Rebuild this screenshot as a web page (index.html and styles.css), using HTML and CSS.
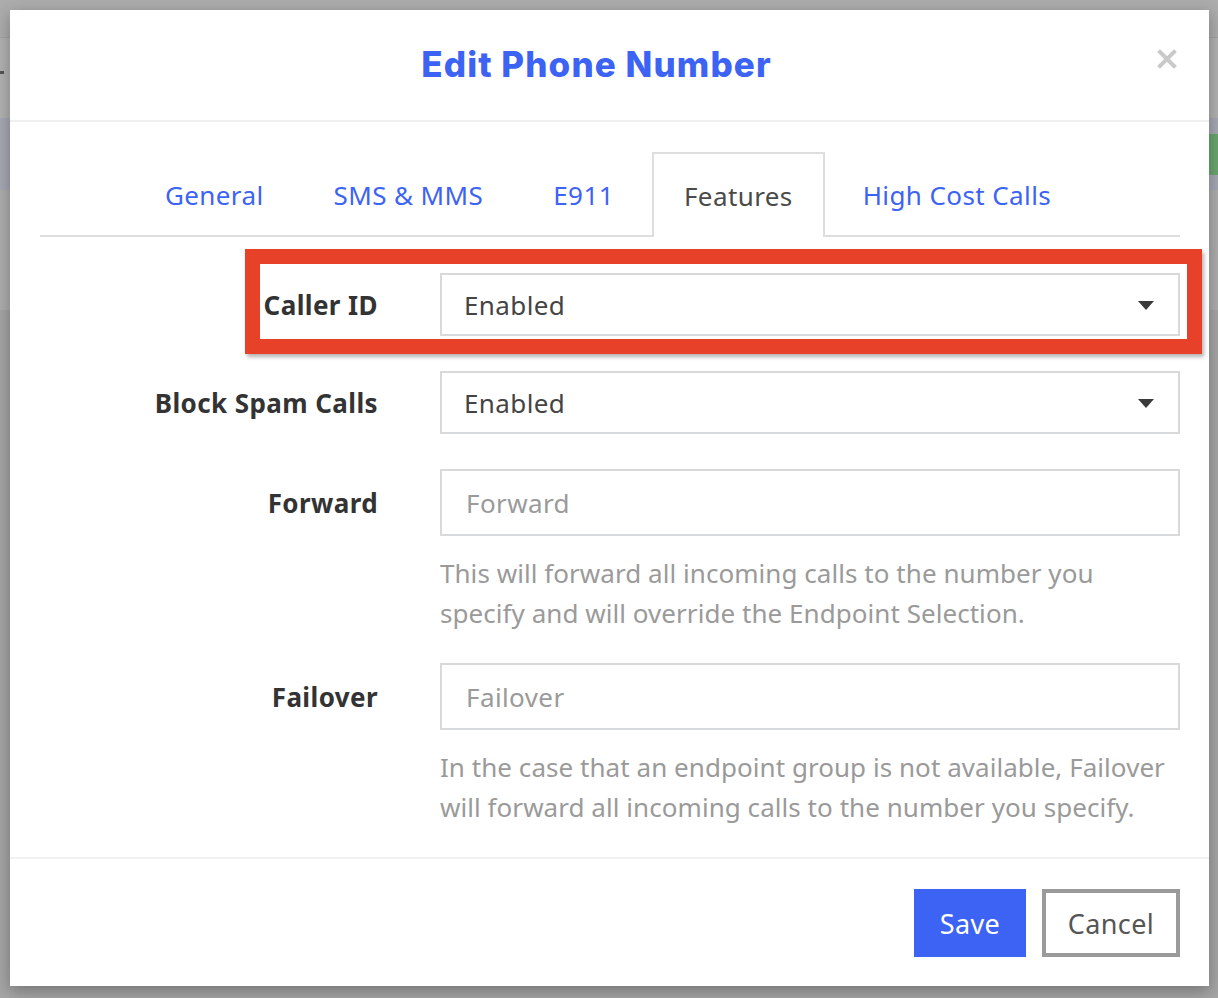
FILE: index.html
```html
<!DOCTYPE html>
<html lang="en">
<head>
  <meta charset="UTF-8">
  <meta name="viewport" content="width=device-width, initial-scale=1.0">
  <title>Edit Phone Number</title>
  <link rel="stylesheet" href="styles.css">
</head>
<body>

  <!-- page behind the dialog (dimmed) -->
  <div class="page">
    <div class="page-top"></div>
    <div class="page-nav"><span class="nav-mark"></span></div>
    <div class="page-band"><span class="band-btn"></span></div>
    <div class="page-row"></div>
    <div class="page-rest"></div>
  </div>

  <div class="modal">
    <div class="modal-header">
      <h2 class="modal-title">Edit Phone Number</h2>
      <button class="close" aria-label="Close">
        <svg width="20" height="20" viewBox="0 0 20 20">
          <path d="M3 3 L17 17 M17 3 L3 17" stroke="#c9c9c9" stroke-width="4" stroke-linecap="square"/>
        </svg>
      </button>
    </div>

    <div class="modal-body">
      <ul class="tabs">
        <li><a href="#">General</a></li>
        <li><a href="#">SMS &amp; MMS</a></li>
        <li><a href="#">E911</a></li>
        <li class="active"><a href="#">Features</a></li>
        <li><a href="#">High Cost Calls</a></li>
      </ul>

      <form class="features">
        <label class="label">Caller ID</label>
        <div class="select">
          <span>Enabled</span>
          <svg class="caret" width="16" height="9" viewBox="0 0 16 9"><path d="M0 0 H16 L8 9 Z" fill="#3a3a3a"/></svg>
        </div>

        <label class="label">Block Spam Calls</label>
        <div class="select">
          <span>Enabled</span>
          <svg class="caret" width="16" height="9" viewBox="0 0 16 9"><path d="M0 0 H16 L8 9 Z" fill="#3a3a3a"/></svg>
        </div>

        <label class="label label-input">Forward</label>
        <input class="input" type="text" placeholder="Forward">
        <p class="help">This will forward all incoming calls to the number you specify and will override the Endpoint Selection.</p>

        <label class="label label-input">Failover</label>
        <input class="input" type="text" placeholder="Failover">
        <p class="help">In the case that an endpoint group is not available, Failover will forward all incoming calls to the number you specify.</p>
      </form>
    </div>

    <div class="modal-footer">
      <button class="btn btn-save">Save</button>
      <button class="btn btn-cancel">Cancel</button>
    </div>

    <!-- annotation round the Caller ID row -->
    <div class="highlight"></div>
  </div>

</body>
</html>
```

FILE: styles.css
```css
* {
  box-sizing: border-box;
}

body {
  margin: 0;
  background-color: #a4a4a4;
  font-family: "Noto Sans", "Open Sans", sans-serif;
  overflow: hidden;
}

/* dimmed page behind */
.page-top {
  height: 38px;
  background-color: #acacac;
  border-bottom: 1px solid #a2a2a2;
}

.page-nav {
  height: 80px;
  background-color: #b1b1b1;
  position: relative;
}

.nav-mark {
  position: absolute;
  left: 0;
  top: 33px;
  width: 4px;
  height: 3px;
  background-color: #555;
}

.page-band {
  height: 72px;
  background-color: #a6a8b2;
  display: flex;
  justify-content: flex-end;
  align-items: center;
}

.band-btn {
  width: 12px;
  height: 41px;
  background-color: #6aa56e;
}

.page-row {
  height: 120px;
  background-color: #adadad;
}

.page-rest {
  height: 688px;
  background-color: #a5a5a5;
}

/* dialog */
.modal {
  position: absolute;
  left: 10px;
  top: 10px;
  width: 1199px;
  height: 976px;
  background-color: #fff;
  box-shadow: 0 5px 15px rgba(0, 0, 0, 0.3);
  display: flex;
  flex-direction: column;
}

.modal-header {
  position: relative;
  flex-shrink: 0;
  height: 112px;
  border-bottom: 2px solid #efefef;
  display: flex;
  justify-content: center;
  align-items: center;
  padding-right: 26px;
}

.modal-title {
  margin: 0 0 2px 0;
  font-family: "Inter", sans-serif;
  font-weight: 800;
  font-size: 35px;
  letter-spacing: 1.1px;
  color: #3d63f5;
}

.close {
  position: absolute;
  right: 32px;
  top: 39px;
  background: none;
  border: none;
  padding: 0;
  cursor: pointer;
}

.modal-body {
  flex: 1;
  padding: 30px 29px 0 30px;
}

.tabs {
  list-style: none;
  margin: 0;
  padding: 0 4px 0 0;
  display: flex;
  justify-content: center;
  gap: 6px;
  border-bottom: 2px solid #dedede;
}

.tabs li {
  height: 83px;
  margin-bottom: -2px;
  border: 2px solid transparent;
  border-bottom: none;
  display: flex;
  align-items: center;
}

.tabs a {
  display: block;
  padding: 0 30px;
  font-size: 26px;
  letter-spacing: 0.4px;
  color: #3d63f5;
  text-decoration: none;
}

.tabs li.active {
  border-color: #dedede;
  background-color: #fff;
  height: 85px;
}

.tabs li.active a {
  color: #4a4a4a;
}

.features {
  display: grid;
  grid-template-columns: 338px 1fr;
  column-gap: 62px;
  align-items: center;
  padding-top: 36px;
}

.label {
  text-align: right;
  font-weight: 700;
  font-size: 26px;
  letter-spacing: 0.4px;
  color: #333;
  margin-bottom: 35px;
}

.label-input {
  margin-bottom: 17px;
}

.select,
.input {
  height: 63px;
  border: 2px solid #d7d9dd;
  background-color: #fff;
  margin-bottom: 35px;
  font-family: inherit;
  font-size: 26px;
  letter-spacing: 0.4px;
  color: #444;
}

.select {
  display: flex;
  align-items: center;
  justify-content: space-between;
  padding: 0 24px 0 22px;
}

.caret {
  margin-top: 1px;
}

.input {
  width: 100%;
  padding: 0 24px;
  margin-bottom: 17px;
  height: 67px;
}

.input::placeholder {
  color: #9a9a9a;
}

.help {
  grid-column: 2;
  margin: 0 0 30px 0;
  font-size: 26px;
  letter-spacing: 0.05px;
  line-height: 40px;
  color: #9a9a9a;
}

.modal-footer {
  flex-shrink: 0;
  height: 129px;
  border-top: 2px solid #f1f1f1;
  display: flex;
  justify-content: flex-end;
  align-items: flex-start;
  gap: 16px;
  padding: 30px 29px 0 0;
}

.btn {
  height: 68px;
  font-family: inherit;
  font-size: 27px;
  letter-spacing: 0.4px;
  cursor: pointer;
}

.btn-save {
  width: 112px;
  background-color: #3d63f5;
  color: #fff;
  border: none;
}

.btn-cancel {
  width: 138px;
  background-color: #fff;
  color: #555;
  border: 4px solid #9a9a9a;
}

.highlight {
  position: absolute;
  left: 235px;
  top: 239px;
  width: 957px;
  height: 105px;
  border: 15px solid #e8412a;
  box-shadow: 2px 3px 4px rgba(0, 0, 0, 0.3);
  pointer-events: none;
}
```
